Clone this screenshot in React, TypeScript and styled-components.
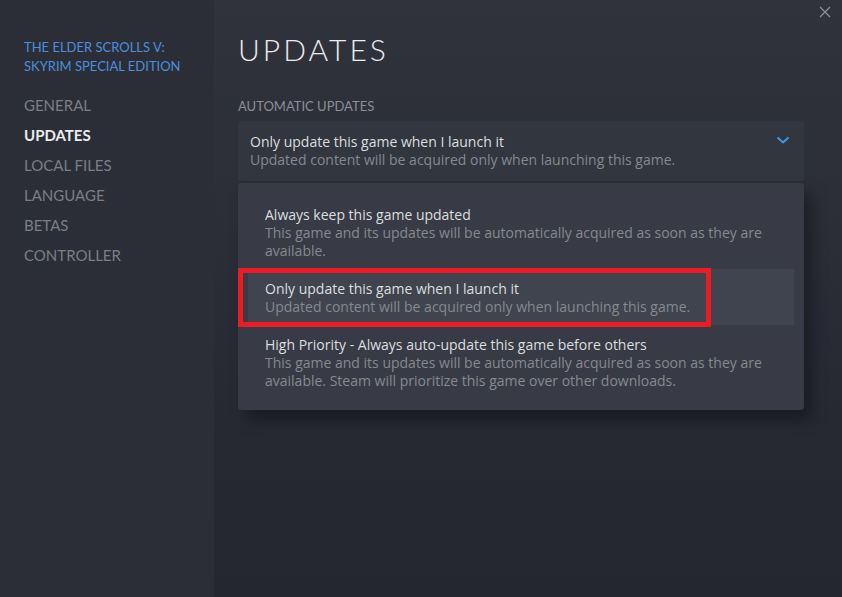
import React from "react";
import styled, { createGlobalStyle } from "styled-components";

const Global = createGlobalStyle`
  html, body { margin: 0; padding: 0; background: #252831; }
  body { font-family: "Open Sans", Arial, sans-serif; }
  * { box-sizing: border-box; }
`;

const Window = styled.div`
  position: relative;
  width: 842px;
  height: 597px;
  display: flex;
  overflow: hidden;
  font-family: "Open Sans", Arial, sans-serif;
`;

const Sidebar = styled.nav`
  width: 214px;
  flex: 0 0 214px;
  background: #2b2e37;
  padding: 38px 0 0 24px;
  display: flex;
  flex-direction: column;
`;

const GameTitle = styled.div`
  color: #4d8fdd;
  font-family: "Lato", sans-serif;
  font-size: 13px;
  line-height: 19px;
  text-transform: uppercase;
  margin-bottom: 14px;
`;

const NavItem = styled.div<{ $active?: boolean }>`
  font-family: "Lato", sans-serif;
  font-size: 15px;
  line-height: 30px;
  height: 30px;
  text-transform: uppercase;
  color: ${(p) => (p.$active ? "#ececec" : "#7b7e85")};
  font-weight: ${(p) => (p.$active ? 700 : 400)};
`;

const Main = styled.main`
  flex: 1;
  background: linear-gradient(180deg, #30333c 0%, #2a2d36 45%, #252831 80%, #24272f 100%);
  padding: 29px 38px 0 24px;
  display: flex;
  flex-direction: column;
`;

const Heading = styled.h1`
  margin: 0;
  font-family: "Lato", sans-serif;
  font-weight: 300;
  font-size: 30px;
  line-height: 40px;
  letter-spacing: 3px;
  color: #ececec;
`;

const SectionLabel = styled.div`
  margin-top: 28px;
  font-family: "Lato", sans-serif;
  font-size: 13px;
  line-height: 18px;
  color: #8b8e95;
  text-transform: uppercase;
`;

const DropdownWrap = styled.div`
  position: relative;
  margin-top: 6px;
`;

const DropdownBox = styled.div`
  height: 60px;
  background: #32363f;
  border-radius: 3px;
  padding: 12px;
  display: flex;
  align-items: flex-start;
  justify-content: space-between;
`;

const OptionText = styled.div`
  display: flex;
  flex-direction: column;
`;

const OptionTitle = styled.div`
  font-size: 14px;
  font-weight: 500;
  line-height: 18px;
  height: 18px;
  color: #dcdedf;
`;

const OptionSub = styled.div`
  font-size: 14px;
  line-height: 18px;
  color: #868990;
`;

const Chevron = styled.svg`
  margin-top: 2px;
  margin-right: 2px;
`;

const Menu = styled.div`
  position: absolute;
  left: 0;
  right: 0;
  top: 62px;
  background: #383b45;
  border-radius: 3px;
  padding: 12px 10px 11px;
  box-shadow: 8px 10px 16px rgba(0, 0, 0, 0.35);
  display: flex;
  flex-direction: column;
`;

const MenuRow = styled.div<{ $selected?: boolean }>`
  padding: 11px 30px 9px 17px;
  background: ${(p) => (p.$selected ? "#40444e" : "transparent")};
`;

const Annotation = styled.div`
  position: absolute;
  left: 0;
  top: 85px;
  width: 473px;
  height: 59px;
  border: 5px solid #ec1c24;
  pointer-events: none;
`;

const Close = styled.svg`
  position: absolute;
  top: 6px;
  right: 11px;
`;

const options = [
  {
    title: "Always keep this game updated",
    sub: "This game and its updates will be automatically acquired as soon as they are available.",
  },
  {
    title: "Only update this game when I launch it",
    sub: "Updated content will be acquired only when launching this game.",
    selected: true,
  },
  {
    title: "High Priority - Always auto-update this game before others",
    sub: "This game and its updates will be automatically acquired as soon as they are available. Steam will prioritize this game over other downloads.",
  },
];

const navItems = ["General", "Updates", "Local Files", "Language", "Betas", "Controller"];

export default function App() {
  return (
    <>
      <Global />
      <Window>
        <Sidebar>
          <GameTitle>
            The Elder Scrolls V:
            <br />
            Skyrim Special Edition
          </GameTitle>
          {navItems.map((n) => (
            <NavItem key={n} $active={n === "Updates"}>
              {n}
            </NavItem>
          ))}
        </Sidebar>
        <Main>
          <Heading>UPDATES</Heading>
          <SectionLabel>Automatic Updates</SectionLabel>
          <DropdownWrap>
            <DropdownBox>
              <OptionText>
                <OptionTitle>Only update this game when I launch it</OptionTitle>
                <OptionSub>Updated content will be acquired only when launching this game.</OptionSub>
              </OptionText>
              <Chevron width="14" height="10" viewBox="0 0 14 10">
                <path d="M1.5 2.5 L7 7.5 L12.5 2.5" fill="none" stroke="#3d9ae8" strokeWidth="2" />
              </Chevron>
            </DropdownBox>
            <Menu>
              {options.map((o) => (
                <MenuRow key={o.title} $selected={o.selected}>
                  <OptionTitle>{o.title}</OptionTitle>
                  <OptionSub>{o.sub}</OptionSub>
                </MenuRow>
              ))}
              <Annotation />
            </Menu>
          </DropdownWrap>
        </Main>
        <Close width="12" height="12" viewBox="0 0 12 12">
          <path d="M1 1 L11 11 M11 1 L1 11" stroke="#8d9097" strokeWidth="1.3" fill="none" />
        </Close>
      </Window>
    </>
  );
}
